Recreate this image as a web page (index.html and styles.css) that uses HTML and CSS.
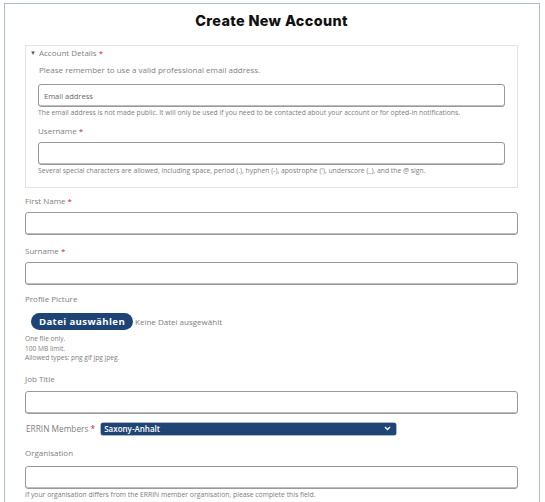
FILE: index.html
```html
<!DOCTYPE html>
<html lang="en">
<head>
<meta charset="utf-8">
<title>Create New Account</title>
<link rel="stylesheet" href="styles.css">
</head>
<body>
<div class="frame">
  <h1 class="title">Create New Account</h1>
  <div class="group">
    <div class="group-head"><span class="tri">&#9660;</span>Account Details <span class="req">*</span></div>
    <p class="intro">Please remember to use a valid professional email address.</p>
    <div class="input input-email"><span class="ph">Email address</span></div>
    <p class="desc">The email address is not made public. It will only be used if you need to be contacted about your account or for opted-in notifications.</p>
    <div class="label label-user">Username <span class="req">*</span></div>
    <div class="input"></div>
    <p class="desc">Several special characters are allowed, including space, period (.), hyphen (-), apostrophe ('), underscore (_), and the @ sign.</p>
  </div>

  <div class="field f-first">
    <div class="label">First Name <span class="req">*</span></div>
    <div class="input"></div>
  </div>

  <div class="field f-sur">
    <div class="label">Surname <span class="req">*</span></div>
    <div class="input"></div>
  </div>

  <div class="field f-pic">
    <div class="label">Profile Picture</div>
    <div class="file-row">
      <span class="file-btn">Datei auswählen</span>
      <span class="file-none">Keine Datei ausgewählt</span>
    </div>
    <div class="notes">
      <div>One file only.</div>
      <div>100 MB limit.</div>
      <div>Allowed types: png gif jpg jpeg.</div>
    </div>
  </div>

  <div class="field f-job">
    <div class="label">Job Title</div>
    <div class="input"></div>
  </div>

  <div class="select-row">
    <span class="label inline">ERRIN Members <span class="req">*</span></span>
    <div class="select">
      <span>Saxony-Anhalt</span>
      <svg class="chev" width="7" height="5" viewBox="0 0 7 5"><path d="M1 1 L3.5 3.5 L6 1" fill="none" stroke="#fff" stroke-width="1.4"/></svg>
    </div>
  </div>

  <div class="field f-org">
    <div class="label">Organisation</div>
    <div class="input"></div>
    <p class="desc">If your organisation differs from the ERRIN member organisation, please complete this field.</p>
  </div>
</div>
</body>
</html>
```

FILE: styles.css
```css
html, body {
  margin: 0;
  padding: 0;
  background: #ffffff;
}
body {
  font-family: "Open Sans", "Noto Sans", sans-serif;
  color: #7b7b7b;
  height: 502px;
  overflow: hidden;
}
.frame {
  margin: 3px 0 0 4px;
  width: 536px;
  height: 520px;
  border: 1.5px solid #aebcd0;
  border-bottom: none;
  box-sizing: border-box;
  padding: 0 21px 0 20px;
}
.title {
  margin: 0;
  height: 41px;
  line-height: 33px;
  text-align: center;
  font-family: "Inter", "DejaVu Sans", sans-serif;
  font-weight: 800;
  font-size: 14.4px;
  letter-spacing: 0.35px;
  color: #111;
}
.group {
  border: 1px solid #e3e3e3;
  padding: 0 12px 12px 12px;
}
.group-head {
  height: 14px;
  line-height: 14px;
  font-size: 8px;
  margin-left: -8px;
  color: #808080;
}
.tri {
  font-size: 6px;
  margin-right: 3px;
  color: #555;
  position: relative;
  top: -1px;
}
.req {
  color: #d21f1f;
}
.intro {
  margin: 4px 0 0 1px;
  font-size: 8px;
  line-height: 12px;
  color: #808080;
}
.input {
  height: 23px;
  border: 1px solid #999;
  border-radius: 3px;
  box-sizing: border-box;
  box-shadow: inset 0 -1px 0 #bdbdbd;
  background: #fff;
  display: flex;
  align-items: center;
}
.input-email {
  margin-top: 8px;
}
.ph {
  font-size: 7.5px;
  color: #666;
  padding-left: 5px;
}
.desc {
  margin: 1px 0 0 0;
  font-size: 6.8px;
  line-height: 9px;
  color: #7d7d7d;
  white-space: nowrap;
}
.label {
  font-size: 8px;
  line-height: 12px;
  color: #808080;
}
.label-user {
  margin-top: 8px;
  margin-bottom: 5px;
}
.field .label {
  margin-bottom: 5px;
}
.f-first { margin-top: 7px; }
.f-sur { margin-top: 10px; }
.f-pic { margin-top: 8px; }
.f-job { margin-top: 10px; }
.f-job .label { margin-bottom: 6px; }
.f-org { margin-top: 12px; }
.f-org .label { margin-bottom: 7px; }
.file-row {
  margin-top: 8px;
  display: flex;
  align-items: center;
  padding-left: 6px;
}
.file-btn {
  background: #1e4476;
  color: #fff;
  font-weight: 700;
  font-size: 9.6px;
  letter-spacing: 0.4px;
  height: 17px;
  line-height: 17px;
  border-radius: 9px;
  width: 102px;
  box-sizing: border-box;
  text-align: center;
  white-space: nowrap;
  flex: none;
}
.file-none {
  font-size: 8px;
  color: #808080;
  margin-left: 2px;
  white-space: nowrap;
}
.notes {
  margin-top: 4px;
  font-size: 6.6px;
  line-height: 9.5px;
  color: #7d7d7d;
}
.select-row {
  margin-top: 9px;
  display: flex;
  align-items: center;
  height: 12px;
}
.label.inline {
  margin-right: 6px;
  padding-left: 1px;
  font-size: 8.3px;
}
.select {
  width: 295px;
  height: 12px;
  background: #1f4577;
  border-radius: 2px;
  color: #fff;
  font-size: 8px;
  font-weight: 600;
  display: flex;
  align-items: center;
  justify-content: space-between;
  padding: 0 5px 0 3px;
  box-sizing: border-box;
  box-shadow: 0 0 0 0.5px #5a6f90;
}
.chev {
  display: block;
}
```
